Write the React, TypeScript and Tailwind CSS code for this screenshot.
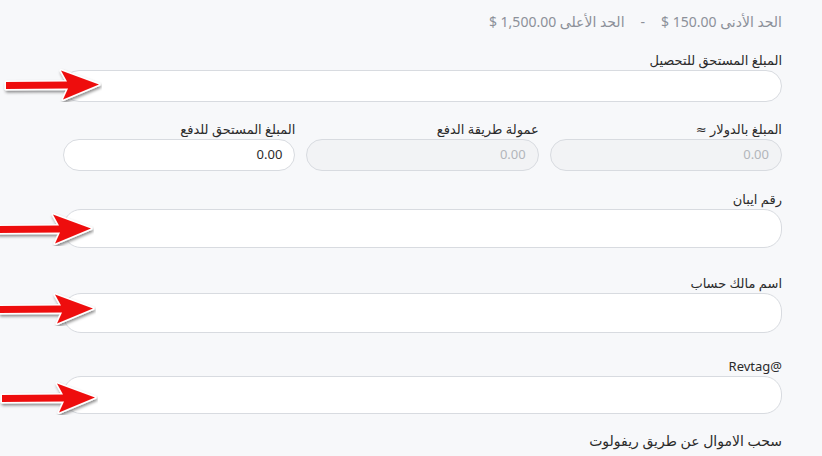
import React from 'react';

const font = { fontFamily: '"Noto Sans", "DejaVu Sans", "Liberation Sans", sans-serif' };

const Arrow = ({ className }: { className: string }) => (
    <svg className={`absolute pointer-events-none ${className}`} width="100" height="34" viewBox="0 0 100 34">
        <defs>
            <filter id="arrowShadow" x="-20%" y="-40%" width="140%" height="180%">
                <feDropShadow dx="1" dy="2" stdDeviation="1.5" floodColor="#000" floodOpacity="0.45" />
            </filter>
        </defs>
        <path
            d="M4 14 L65 13.5 L59 2.5 L97 16.5 L61 31.5 L66 20.5 L4 21 Z"
            fill="#ee1111"
            stroke="#fff"
            strokeWidth="3"
            strokeLinejoin="round"
            paintOrder="stroke"
            filter="url(#arrowShadow)"
        />
    </svg>
);

const Field = ({ label, h, className = '' }: { label: string; h: string; className?: string }) => (
    <div className={className}>
        <label className="block text-[13px] leading-[18px] text-[#2b2b2b] mb-px">{label}</label>
        <div className={`w-full ${h} rounded-[18px] border border-[#d8dbe0] bg-white`} />
    </div>
);

const SmallField = ({ label, value, disabled }: { label: string; value: string; disabled?: boolean }) => (
    <div className="flex-1">
        <label className="block text-[13px] leading-[18px] text-[#2b2b2b] mb-px">{label}</label>
        <div
            className={`h-[32px] rounded-2xl border border-[#d8dbe0] flex items-center px-3 text-[13px] ${
                disabled ? 'bg-[#f2f3f5] text-[#b3b6bb]' : 'bg-white text-[#2b2b2b]'
            }`}
        >
            {value}
        </div>
    </div>
);

export default function App() {
    return (
        <div dir="rtl" style={font} className="relative w-[822px] h-[456px] overflow-hidden bg-[#f7f8fa]">
            <div className="pr-[40px] pl-[63px] pt-[12px]">
                {/* Limits */}
                <div className="flex items-center gap-4 text-[14px] leading-[20px] text-[#8c9099]">
                    <span>الحد الأدنى 150.00 $</span>
                    <span>-</span>
                    <span>الحد الأعلى 1,500.00 $</span>
                </div>

                <Field label="المبلغ المستحق للتحصيل" h="h-[32px]" className="mt-[19px]" />

                <div className="flex gap-[11px] mt-[18px]">
                    <SmallField label="المبلغ بالدولار ≈" value="0.00" disabled />
                    <SmallField label="عمولة طريقة الدفع" value="0.00" disabled />
                    <SmallField label="المبلغ المستحق للدفع" value="0.00" />
                </div>

                <Field label="رقم ايبان" h="h-[39px]" className="mt-[19px]" />
                <Field label="اسم مالك حساب" h="h-[40px]" className="mt-[26px]" />
                <Field label="@Revtag" h="h-[38px]" className="mt-[24px]" />

                <h3 className="mt-[16px] text-[14px] leading-[22px] text-[#2b2b2b]">سحب الاموال عن طريق ريفولوت</h3>
            </div>

            {/* Annotation arrows */}
            <Arrow className="left-[2px] top-[68px]" />
            <Arrow className="left-[-6px] top-[212px]" />
            <Arrow className="left-[-4px] top-[292px]" />
            <Arrow className="left-[-2px] top-[381px]" />
        </div>
    );
}
